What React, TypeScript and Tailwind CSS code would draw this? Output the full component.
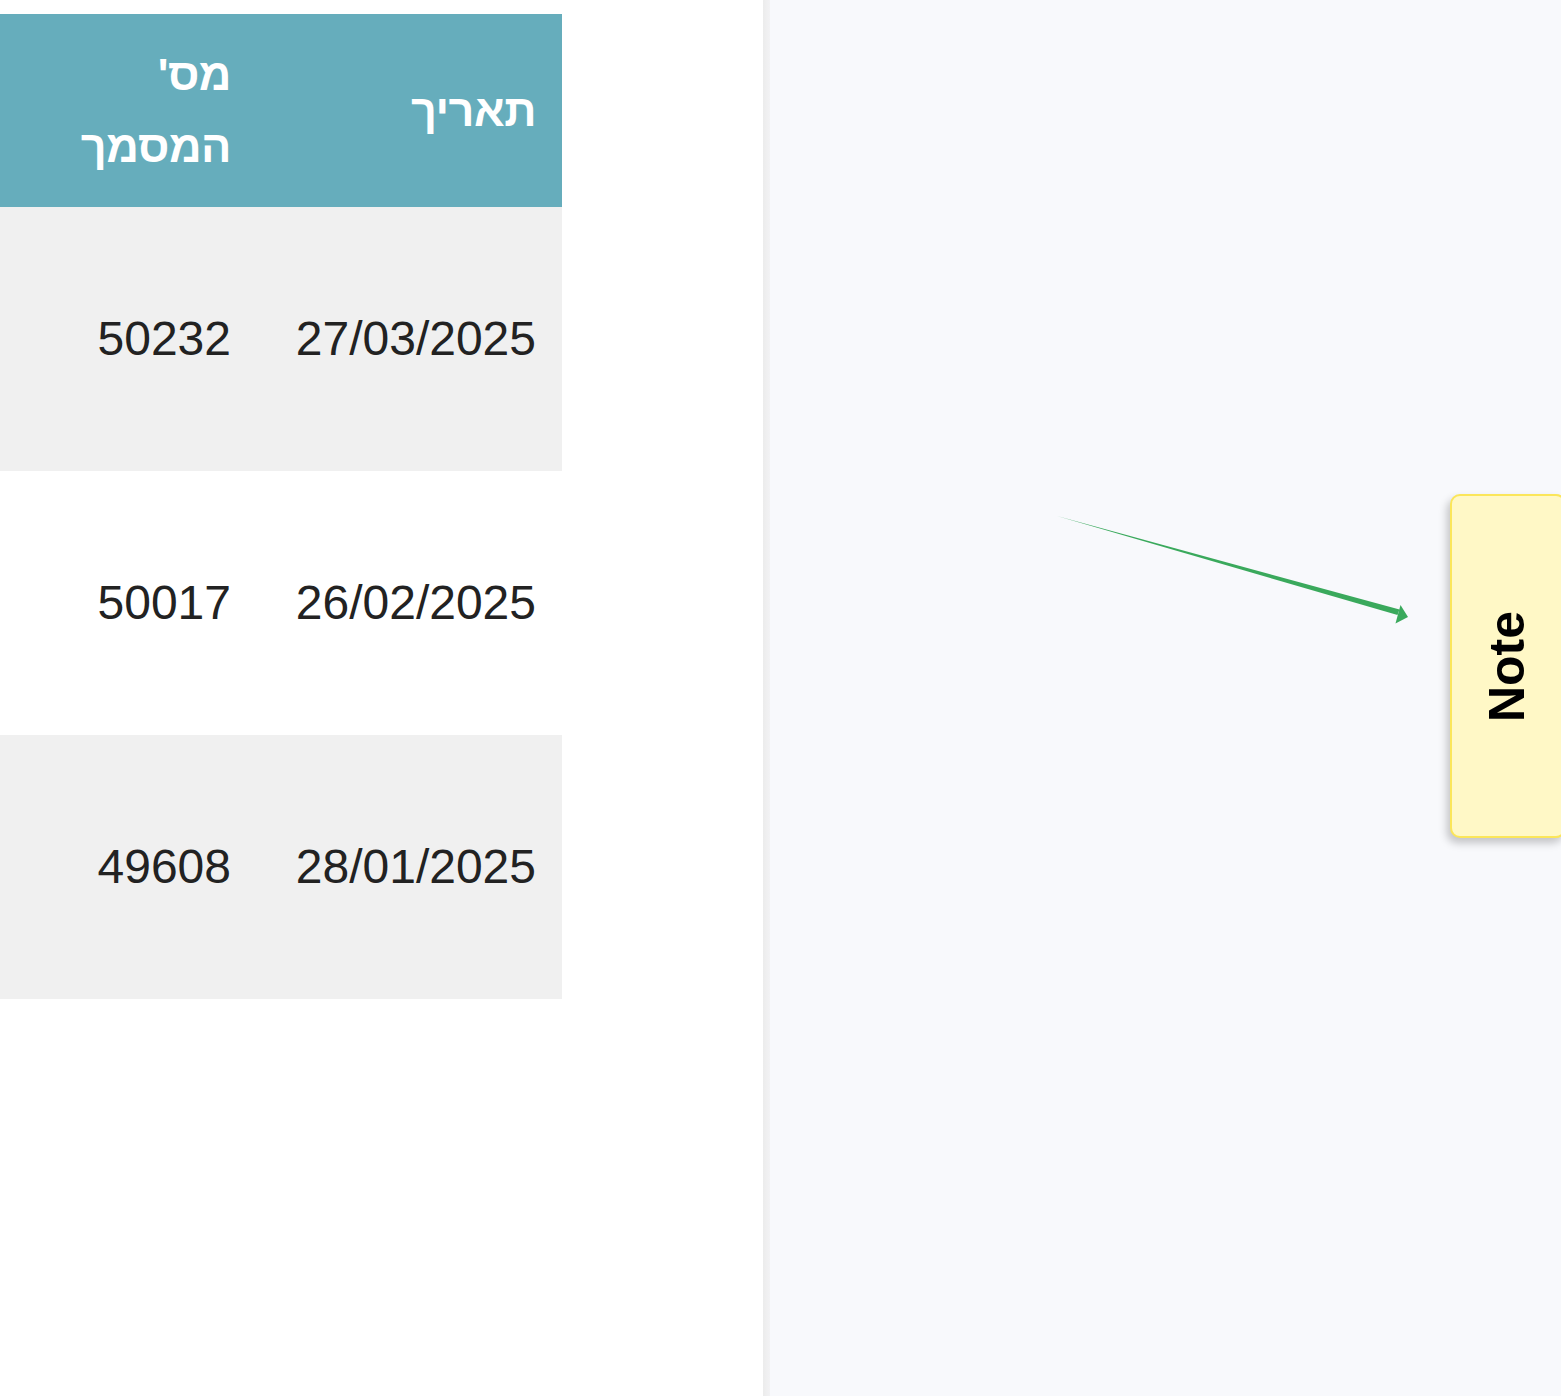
// Document list pane (RTL) beside a canvas with a note tab and an arrow.

const rows = [
  { date: "27/03/2025", doc: "50232", shaded: true },
  { date: "26/02/2025", doc: "50017", shaded: false },
  { date: "28/01/2025", doc: "49608", shaded: true },
];

function DocTable() {
  return (
    <div dir="rtl" className="mt-[14px] w-[562px] font-['Liberation_Sans','DejaVu_Sans',sans-serif]">
      <div className="grid h-[193px] grid-cols-[305px_257px] bg-[#66adbc] text-[45px] font-bold leading-[72px] tracking-[-0.5px] text-white">
        <div className="flex items-center pr-[26px]">תאריך</div>
        <div className="flex items-center pr-[26px]">
          <span>
            מס'
            <br />
            המסמך
          </span>
        </div>
      </div>
      {rows.map((r) => (
        <div
          key={r.doc}
          className={`grid h-[264px] grid-cols-[305px_257px] text-[48px] text-[#222] ${
            r.shaded ? "bg-[#f0f0f0]" : "bg-white"
          }`}
        >
          <div className="flex items-center pr-[26px]">{r.date}</div>
          <div className="flex items-center pr-[26px]">{r.doc}</div>
        </div>
      ))}
    </div>
  );
}

export default function App() {
  return (
    <div className="relative flex h-[1396px] w-full overflow-hidden bg-white">
      <div className="w-[763px] shrink-0 bg-white">
        <DocTable />
      </div>
      <div className="w-[7px] shrink-0 bg-gradient-to-r from-[#ececec] to-[#f2f2f4]" />
      <div className="flex-1 bg-[#f8f9fc]" />

      {/* connector arrow */}
      <svg
        className="pointer-events-none absolute left-0 top-0"
        width={1561}
        height={1396}
        viewBox="0 0 1561 1396"
      >
        <polygon points="1057,516 1399.5,609.5 1397.5,615" fill="#3aa95c" />
        <polygon points="1400.5,605 1408,617 1395.5,623.5" fill="#3aa95c" />
      </svg>

      {/* note tab */}
      <div className="absolute left-[1450px] top-[494px] flex h-[344px] w-[116px] items-center justify-center rounded-[10px] border-2 border-[#fbe65a] bg-[#fff8c6] shadow-[-3px_5px_8px_rgba(0,0,0,0.22)]">
        <span className="-rotate-90 whitespace-nowrap font-['Liberation_Sans',sans-serif] text-[50px] font-bold text-black">
          Note
        </span>
      </div>
    </div>
  );
}
